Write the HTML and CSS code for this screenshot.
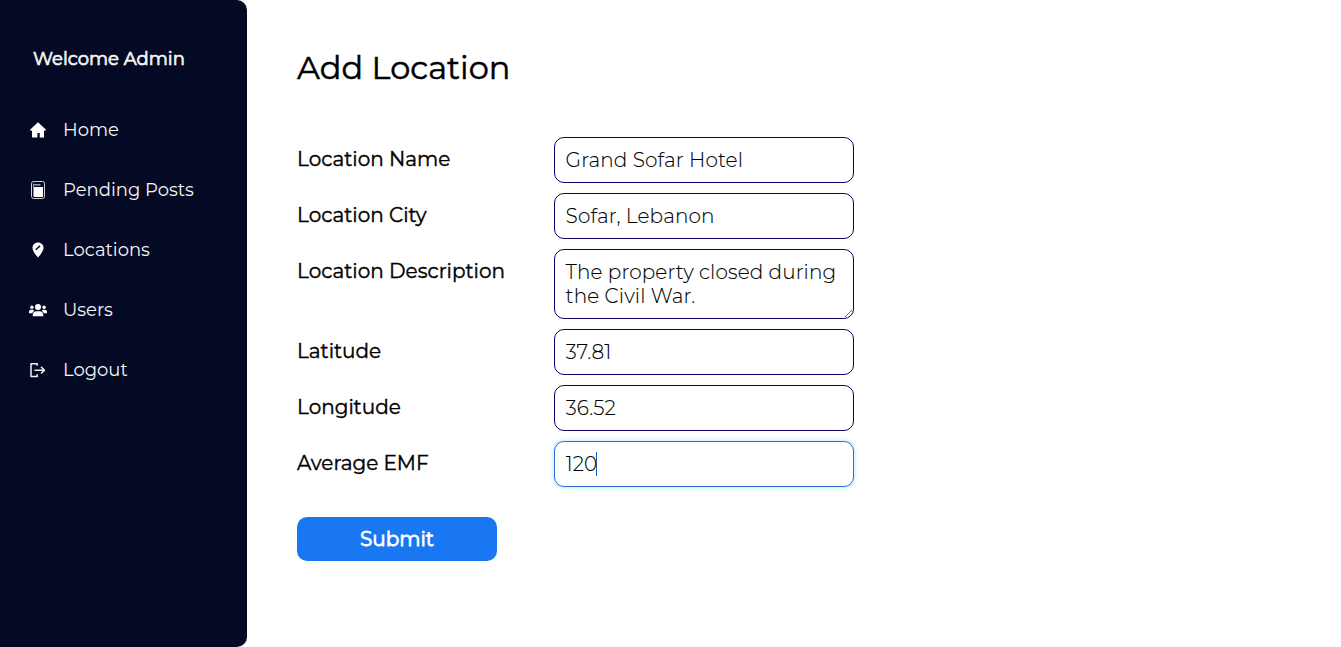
FILE: index.html
```html
<!DOCTYPE html>
<html lang="en">
<head>
<meta charset="utf-8">
<title>Add Location</title>
<link rel="stylesheet" href="styles.css">
</head>
<body>
<div class="layout">
  <aside class="sidebar">
    <h2 class="welcome">Welcome Admin</h2>
    <nav class="menu">
      <a class="item"><svg class="icon" viewBox="0 0 18 18"><path fill="#fff" d="M9 1.200 17 8.800 16 10 15 9.600V16.500H10.700V12H8.400V16.500H3V9.600L2 10 1 8.800Z"/></svg><span>Home</span></a>
      <a class="item"><svg class="icon" viewBox="0 0 18 18"><rect x="2.500" y=".5" width="13" height="17" rx="2" fill="#060a24" stroke="#cfd0da"/><path d="M4.500 2.500V15.500" stroke="#92949f"/><path d="M5 3.800h6.500" stroke="#92949f" stroke-width="1.600"/><path fill="#fff" d="M5 6H14v10H5z"/></svg><span>Pending Posts</span></a>
      <a class="item"><svg class="icon" viewBox="0 0 18 18"><path fill="#fff" d="M9 1.500C5.800 1.500 3.500 3.900 3.500 6.800 3.500 10 6.300 13.400 9 16.600 11.700 13.400 14.500 10 14.500 6.800 14.500 3.900 12.200 1.500 9 1.500Z"/><path d="m6.700 8.700 4.300-3.800" stroke="#060a24" stroke-width="1.500"/></svg><span>Locations</span></a>
      <a class="item"><svg class="icon" viewBox="0 0 18 18"><g fill="#fff"><circle cx="9" cy="6" r="3"/><circle cx="2.900" cy="6.200" r="1.700"/><circle cx="15.100" cy="6.200" r="1.700"/><path d="M3.700 15.300V14c0-2.200 1.500-3.700 3.600-3.700h3.400c2.100 0 3.600 1.500 3.600 3.700v1.300ZM0 12.200v-1.500C0 9.500.900 8.700 2 8.700h2.200l.9 1L3 12.200Zm18 0v-1.500c0-1.200-.9-2-2-2h-2.200l-.9 1 2.100 2.500Z"/></g></svg><span>Users</span></a>
      <a class="item"><svg class="icon" viewBox="0 0 18 18"><path d="M8.200 4.800V2.700H2v12.800h6.200V13.200M5.500 9.200H15M12 5.900 15.500 9.200 12 12.500" fill="none" stroke="#f2f2f5" stroke-width="1.500" stroke-linejoin="round"/></svg><span>Logout</span></a>
    </nav>
  </aside>
  <main class="content">
    <h1 class="title">Add Location</h1>
    <form class="form">
      <div class="row"><label class="label">Location Name</label><input class="field" value="Grand Sofar Hotel"></div>
      <div class="row"><label class="label">Location City</label><input class="field" value="Sofar, Lebanon"></div>
      <div class="row"><label class="label">Location Description</label><textarea class="field description">The property closed during the Civil War.</textarea></div>
      <div class="row"><label class="label">Latitude</label><input class="field" value="37.81"></div>
      <div class="row"><label class="label">Longitude</label><input class="field" value="36.52"></div>
      <div class="row"><label class="label">Average EMF</label><div class="focus-wrap"><input class="field focused" value="120"><i class="caret"></i></div></div>
      <button class="submit" type="button">Submit</button>
    </form>
  </main>
</div>
</body>
</html>
```
FILE: styles.css
```css
* { box-sizing: border-box; }
body { margin: 0; background: #fff; color: #000; font-family: Montserrat, Inter, "Liberation Sans", sans-serif; }
.layout { display: flex; height: 647px; }
.sidebar { flex: none; width: 247px; padding: 44px 29px 0; background: #050a24; border-radius: 0 10px 10px 0; color: #f5f5f7; }
.welcome { margin: 0 0 41px 4px; font-size: 18px; line-height: 30px; font-weight: 400; -webkit-text-stroke: .7px currentColor; white-space: nowrap; }
.menu { display: grid; gap: 30px; }
.item { display: flex; align-items: center; gap: 16px; height: 30px; font-size: 18px; font-weight: 400; white-space: nowrap; }
.icon { flex: none; width: 18px; height: 18px; }
.content { padding: 47px 0 0 50px; }
.title { margin: 0 0 48px; font-size: 32px; line-height: 42px; font-weight: 400; -webkit-text-stroke: .5px currentColor; }
.form { display: grid; gap: 10px; }
.row { display: flex; align-items: flex-start; }
.label { width: 257px; padding-top: 10px; font-size: 20px; line-height: 24px; font-weight: 400; -webkit-text-stroke: .4px currentColor; white-space: nowrap; }
.field { display: block; width: 300px; height: 46px; margin: 0; padding: 10px 10px 10px 10.6px; border: 1px solid #0b0166; border-radius: 10px; background: #fff; color: #000; font: 300 20px/24px Montserrat, Inter, "Liberation Sans", sans-serif; letter-spacing: .12px; -webkit-text-stroke: .1px currentColor; outline: none; }
.description { height: 70px; overflow: hidden; resize: both; }
.focus-wrap { position: relative; }
.focused { border-color: #2870c8; box-shadow: 0 0 5px #a8deff; }
.caret { position: absolute; left: 42px; top: 11px; width: 1px; height: 24px; background: #1c5ca8; }
.submit { width: 200px; height: 44px; margin: 20px 0 0; padding: 0; border: 0; border-radius: 10px; background: #1a77f2; color: #fff; font: 400 20px/44px Montserrat, Inter, "Liberation Sans", sans-serif; -webkit-text-stroke: .8px currentColor; }
```
